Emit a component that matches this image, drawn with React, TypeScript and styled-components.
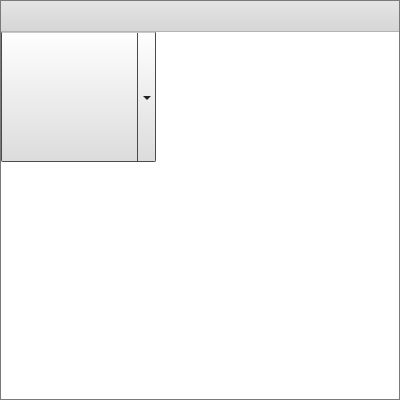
import React from "react";
import styled, { createGlobalStyle } from "styled-components";

const Global = createGlobalStyle`
  html, body { margin: 0; padding: 0; background: #fff; }
  body { font-family: "Liberation Sans", Arial, sans-serif; }
`;

const Frame = styled.div`
  box-sizing: border-box;
  width: 400px;
  height: 400px;
  border: 1px solid #7a7a7a;
  background: #fff;
  display: flex;
  flex-direction: column;
`;

const Toolbar = styled.div`
  height: 30px;
  flex: none;
  background: linear-gradient(#e4e4e4, #d6d6d6);
  border-bottom: 1px solid #b4b4b4;
`;

const SplitButton = styled.div`
  display: flex;
  width: 155px;
  height: 130px;
  box-sizing: border-box;
  border: 1px solid #4a4a4a;
  border-top-color: #c8c8c8;
  border-radius: 0 0 2px 2px;
  background: linear-gradient(#fefefe, #dcdcdc);
`;

const MainPart = styled.div`
  flex: 1;
`;

const ArrowPart = styled.div`
  width: 17px;
  flex: none;
  border-left: 1px solid #4a4a4a;
  display: flex;
  align-items: center;
  justify-content: center;
`;

const Caret = styled.div`
  width: 0;
  height: 0;
  border-left: 4px solid transparent;
  border-right: 4px solid transparent;
  border-top: 4px solid #222;
  margin-top: 2px;
`;

export default function App() {
  return (
    <>
      <Global />
      <Frame>
        <Toolbar />
        <SplitButton>
          <MainPart />
          <ArrowPart>
            <Caret />
          </ArrowPart>
        </SplitButton>
      </Frame>
    </>
  );
}
